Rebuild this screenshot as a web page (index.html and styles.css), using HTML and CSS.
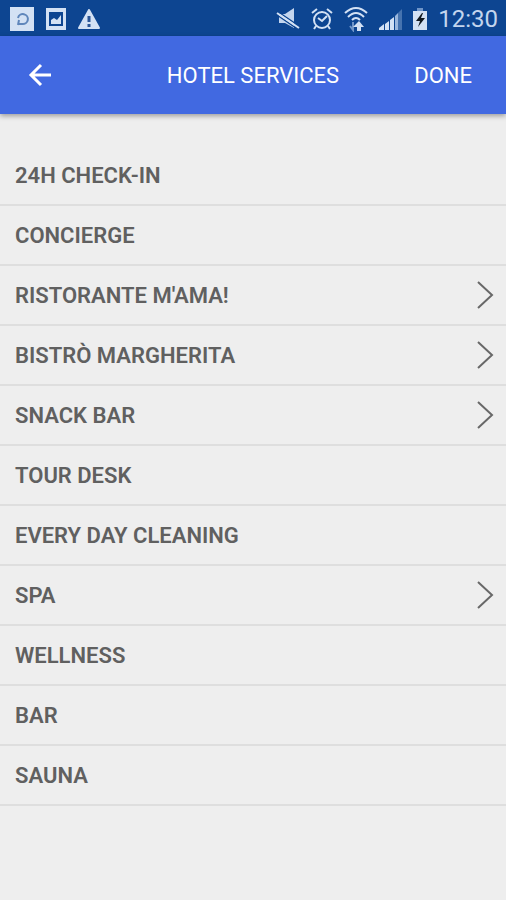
FILE: index.html
```
<!DOCTYPE html>
<html lang="en">
<head>
    <meta charset="UTF-8">
    <meta name="viewport" content="width=device-width, initial-scale=1.0">
    <title>Hotel Services</title>
    <link rel="stylesheet" href="styles.css">
</head>
<body>
    <div class="status-bar">
        <div class="status-left">
            <svg width="24" height="24" viewBox="0 0 24 24">
                <rect width="24" height="24" fill="#d3e1f4"/>
                <path d="M8 18l1-5M8 11a5 5 0 1 1 4 6H8" fill="none" stroke="#5f86bb" stroke-width="2"/>
            </svg>
            <svg width="20" height="22" viewBox="0 0 20 22">
                <path fill="#d3e1f4" fill-rule="evenodd" d="M0 0h20v22H0zM3 4v14h14V4z"/>
                <path fill="#d3e1f4" d="M5 16v-4l3-2 3 2 4-5v9z"/>
            </svg>
            <svg width="22" height="20" viewBox="0 0 22 20">
                <path d="M11 1L21 19H1z" fill="#d3e1f4" stroke="#d3e1f4" stroke-width="2" stroke-linejoin="round"/>
                <path d="M11 7v6M11 15v3" stroke="#2a5596" stroke-width="3"/>
            </svg>
        </div>
        <div class="status-right">
            <svg width="24" height="22" viewBox="0 0 24 22">
                <path d="M3 6h6l9-6v20l-9-5H3z" fill="#c3d5ee"/>
                <path d="M1 3l22 15M1 7l22 15" stroke="#0d4591" stroke-width="1.5"/>
                <path d="M1 5l22 15" stroke="#d3e1f4" stroke-width="2"/>
            </svg>
            <svg width="22" height="24" viewBox="0 0 22 24" fill="none" stroke="#d3e1f4" stroke-width="2">
                <circle cx="11" cy="13" r="8"/>
                <path d="M7 11l4 3 5-5M1 6l5-4M21 6l-5-4M5 19l-2 3M17 19l2 3"/>
            </svg>
            <svg width="24" height="26" viewBox="0 0 24 26" fill="none" stroke="#d3e1f4">
                <path d="M1 7Q12-3 23 7M4 11Q12 3 20 11M8 14Q12 10 16 14" stroke-width="2"/>
                <path d="M9 16v7M6 20l3 4v-4" stroke="#6f95c8" stroke-width="2"/>
                <path d="M15 25v-6" stroke-width="4"/>
                <path d="M9 21l6-6 5 6z" fill="#d3e1f4" stroke="none"/>
            </svg>
            <svg width="23" height="22" viewBox="0 0 23 22">
                <path d="M0 22v-2l5-4v6zM6 22v-6l4-3v9zM11 22v-10l4-3v13z" fill="#d3e1f4"/>
                <path d="M16 22V8l3-3v17z" fill="#9ab6dc"/>
                <path d="M19 22V5l4-4v21z" fill="#4673af"/>
            </svg>
            <svg width="14" height="22" viewBox="0 0 14 22">
                <path d="M4 0h6v3H4z" fill="#6f95c8"/>
                <path d="M0 3h14v19H0z" fill="#d3e1f4"/>
                <path d="M9 5L3 13h4l-2 6 7-9H8l2-5z" fill="#101820"/>
            </svg>
            <time class="clock">12:30</time>
        </div>
    </div>

    <header class="toolbar">
        <button class="back" type="button" aria-label="Back">
            <svg width="24" height="24" viewBox="0 0 24 24" fill="none" stroke="#fff" stroke-width="3">
                <path d="M23 12H3M13 2L3 12l10 10"/>
            </svg>
        </button>
        <h1>HOTEL SERVICES</h1>
        <button class="done" type="button">DONE</button>
    </header>

    <main>
        <ul class="services">
            <li>24H CHECK-IN</li>
            <li>CONCIERGE</li>
            <li>
                <a href="#ristorante">RISTORANTE M'AMA!
                    <svg class="chevron" viewBox="0 0 18 30"><path d="M2 2l14 13L2 28"/></svg>
                </a>
            </li>
            <li>
                <a href="#bistro">BISTRÒ MARGHERITA
                    <svg class="chevron" viewBox="0 0 18 30"><path d="M2 2l14 13L2 28"/></svg>
                </a>
            </li>
            <li>
                <a href="#snack-bar">SNACK BAR
                    <svg class="chevron" viewBox="0 0 18 30"><path d="M2 2l14 13L2 28"/></svg>
                </a>
            </li>
            <li>TOUR DESK</li>
            <li>EVERY DAY CLEANING</li>
            <li>
                <a href="#spa">SPA
                    <svg class="chevron" viewBox="0 0 18 30"><path d="M2 2l14 13L2 28"/></svg>
                </a>
            </li>
            <li>WELLNESS</li>
            <li>BAR</li>
            <li>SAUNA</li>
        </ul>
    </main>
</body>
</html>
```

FILE: styles.css
```
* {
    box-sizing: border-box;
}
body {
    font-family: Roboto, "Liberation Sans", sans-serif;
    font-size: 22px;
    background-color: #eee;
    color: #606060;
    margin: 0;
    min-height: 100vh;
}
svg {
    display: block;
    flex-shrink: 0;
}
.status-bar {
    display: flex;
    justify-content: space-between;
    align-items: center;
    height: 36px;
    padding: 2px 8px 0 10px;
    background: #0d4591;
}
.status-left {
    display: flex;
    align-items: center;
    gap: 12px;
}
.status-right {
    display: flex;
    align-items: center;
    gap: 11px;
}
.clock {
    color: #c3d5ee;
    font-size: 24px;
    line-height: 34px;
}
.toolbar {
    display: grid;
    grid-template-columns: 1fr auto 1fr;
    align-items: center;
    height: 78px;
    padding: 0 28px;
    background: #4169e1;
    color: #fff;
    box-shadow: 0 2px 5px rgba(0,0,0,0.35);
}
.toolbar h1 {
    margin: 0;
    font-size: 22px;
    font-weight: 400;
}
.toolbar button {
    border: none;
    background: none;
    padding: 0;
    color: inherit;
    font: inherit;
    cursor: pointer;
}
.back {
    justify-self: start;
}
.toolbar .done {
    justify-self: end;
    padding-right: 6px;
}
main {
    padding: 32px 0;
}
.services {
    list-style: none;
    margin: 0;
    padding: 0;
}
.services li {
    display: flex;
    align-items: center;
    height: 60px;
    padding: 0 12px 0 15px;
    border-bottom: 2px solid #dedede;
    font-weight: 600;
}
.services a {
    display: flex;
    flex: 1;
    justify-content: space-between;
    align-items: center;
    color: inherit;
    text-decoration: none;
}
.chevron {
    width: 18px;
    height: 30px;
    fill: none;
    stroke: #686868;
    stroke-width: 2;
}
```
